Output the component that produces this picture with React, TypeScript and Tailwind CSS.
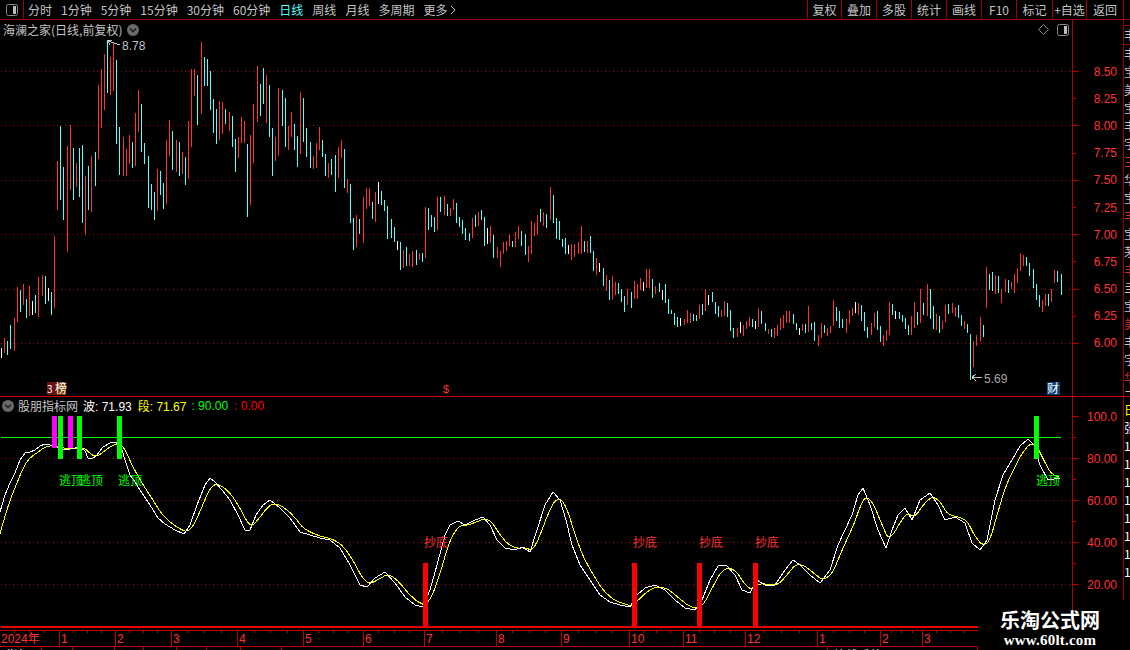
const leftMenu = ["分时", "1分钟", "5分钟", "15分钟", "30分钟", "60分钟", "日线", "周线", "月线", "多周期", "更多"];
const rightMenu = [
  ["复权", 34],
  ["叠加", 35],
  ["多股", 35],
  ["统计", 35],
  ["画线", 35],
  ["F10", 35],
  ["标记", 36],
  ["+自选", 34],
  ["返回", 37],
] as const;

const priceLabels = ["8.50", "8.25", "8.00", "7.75", "7.50", "7.25", "7.00", "6.75", "6.50", "6.25", "6.00"];
const indicatorLabels = ["100.0", "", "80.00", "", "60.00", "", "40.00", "", "20.00"];
const months = [
  ["2024年", 59],
  ["1", 56],
  ["2", 56],
  ["3", 66],
  ["4", 66],
  ["5", 60],
  ["6", 61],
  ["7", 72],
  ["8", 65],
  ["9", 68],
  ["10", 54],
  ["11", 62],
  ["12", 72],
  ["1", 63],
  ["2", 42],
  ["3", 56],
] as const;
const lowerCells = [
  ["指标", 42],
  ["", 31],
  ["", 42],
  ["", 29],
  ["", 33],
  ["", 30],
  ["", 34],
  ["", 41],
  ["", 546],
  ["均线系统", 150],
] as const;

const sideChars = "丰宝美宝丰字三华宝丰宝茅丰亖宝美丰字华三".split("");
const sideLower = ["日", "张", "1", "1", "1", "1", "1", "1", "1", "1"];

type Bar = { x: number; top: number; bottom: number; color: string };
const barColors: Record<string, string> = { R: "#ff3232", C: "#54ffff", W: "#ffffff" };

// crops were read at 3x, so each entry is "x top bottom colour" in crop pixels
function readBars(ox: number, oy: number, list: string): Bar[] {
  return list.split(",").map((entry) => {
    const [x, top, bottom, c] = entry.trim().split(" ");
    return {
      x: ox + Math.floor(Number(x) / 3),
      top: oy + Math.round(Number(top) / 3),
      bottom: oy + Math.round(Number(bottom) / 3),
      color: barColors[c],
    };
  });
}

const bars: Bar[] = [
  ...readBars(0, 200, "4 444 474 W,13 414 459 R,22 423 465 C,31 375 447 C,43 354 453 R,52 261 366 R,61 270 336 C,70 252 315 R,79 297 354 C,88 258 348 R,97 303 345 W,106 285 339 C,115 231 351 R,127 225 288 R,136 228 312 C,145 264 303 W,154 276 345 C,163 108 324 R"),
  ...readBars(0, 40, "171 363 510 R,181 258 480 C,190 381 540 C,202 318 636 R,211 255 450 R,220 324 480 C,229 369 441 R,238 324 471 C,247 315 549 C,256 408 585 R,265 378 510 C,274 348 516 R,286 336 438 C,295 135 357 R,304 87 264 R,313 42 210 R,322 0 159 C,331 51 165 R,340 10 153 R,349 60 312 C,358 261 405 C,370 291 408 R,379 327 408 R,388 285 372 R,397 306 384 C,406 219 378 R,415 150 276 R,424 192 336 C,433 309 372 C,445 348 504 C,454 432 510 C,463 456 540 C,472 387 513 R,481 393 465 C,490 429 507 C,499 300 492 R,508 240 348 R,517 273 390 C,529 300 396 R,538 306 408 C,547 336 402 R,556 351 435 C,565 243 417 R,574 87 321 R,583 87 168 R,592 105 255 C,604 6 222 R,613 51 138 C,622 57 138 C,631 93 210 C,640 177 279 C,649 207 312 C,658 183 300 R,667 186 282 R,676 207 252 C,688 216 273 R,697 228 321 C,706 297 396 C,715 291 354 R,724 231 309 R,733 243 309 R,742 312 531 C,751 285 495 R,760 192 369 R,772 78 246 R,781 132 228 C,790 84 192 C,799 105 249 R,808 135 291 C,817 264 408 C,826 291 363 R,835 144 348 R,847 150 258 C,856 174 321 C,865 258 330 R,874 216 291 R,883 252 330 C,892 288 381 C"),
  ...readBars(300, 90, "1 6 192 R,10 24 156 C,19 114 201 C,31 156 234 C,40 198 237 R,49 159 234 R,58 111 180 R,67 150 201 C,76 192 258 C,85 219 264 R,94 207 255 C,106 195 306 C,115 171 264 R,124 150 204 R,133 177 294 C,142 267 309 R,151 282 399 C,160 384 480 C,169 375 471 R,178 387 432 C,190 321 459 R,199 294 357 R,208 294 348 R,217 336 387 C,226 306 396 R,235 276 342 W,244 303 345 C,253 330 363 C,262 348 447 C,274 387 444 C,283 411 456 C,292 453 480 W,301 456 540 C,310 480 534 R,319 471 528 C,328 492 528 R,337 483 531 R,349 480 525 C,358 489 510 R,367 489 516 C,376 351 504 R,385 354 420 C,394 375 411 C,403 381 426 C,412 321 420 R,421 321 366 C,433 318 375 R,442 342 378 C,451 354 378 R,460 327 360 R,469 339 399 C,478 381 411 C,487 390 432 C,496 414 450 C,508 429 453 C,517 384 444 R,526 375 411 C,535 366 408 R,544 360 390 C,553 381 468 C,562 414 462 W,571 408 459 R,580 435 504 C,592 471 504 R,601 483 531 R,610 456 492 R,619 453 483 R,628 435 468 R,637 453 471 C,646 426 471 R,655 408 447 R,664 423 468 C,676 432 495 C,685 468 516 R,694 393 492 R,703 399 438 R,712 375 432 R,721 357 396 C,730 366 408 R,739 372 414 C,751 291 390 R,760 315 399 C,769 384 447 C,778 393 450 C,787 447 471 C,796 444 492 C,805 465 492 W,814 462 510 R,823 462 501 R,835 456 492 R,844 408 492 R,853 453 486 C,862 453 489 R,871 438 489 C,880 483 543 C,889 504 555 R,898 519 546 W"),
  ...readBars(590, 240, "40 84 138 C,49 105 153 R,58 120 180 C,67 108 177 R,76 126 165 R,85 129 162 C,94 147 186 C,103 168 216 C,112 147 195 R,124 156 204 C,133 123 177 R,142 132 177 R,151 114 150 R,160 126 153 W,169 87 144 R,178 87 144 R,187 117 174 C,196 138 162 R,208 129 156 C,217 150 180 W,226 132 189 C,235 177 222 C,244 210 222 C,253 219 255 C,262 231 261 C,271 234 258 W,283 237 255 R,292 210 249 R,301 219 249 R,310 222 243 C,319 225 243 C,328 195 237 R,337 192 225 C,346 150 213 R,355 165 195 W,367 156 186 C,376 186 222 C,385 198 231 C,394 210 231 R,403 183 228 R,412 189 231 C,421 210 273 C,430 264 294 C,442 264 291 R,451 246 279 W,460 255 288 R,469 243 267 R,478 231 258 R,487 237 261 C,496 243 267 W,505 204 261 R,514 213 252 C,526 249 273 C,535 267 282 R,544 267 291 C,553 264 294 R,562 255 288 R,571 234 270 R,580 225 264 R,589 213 249 R,598 213 249 R,610 222 252 C,619 249 270 C,628 264 285 W,637 252 273 R,646 252 279 C,655 198 276 R,664 249 270 C,673 246 303 C,685 285 318 R,694 249 294 R,703 255 279 C,712 264 288 R"),
  ...readBars(825, 240, "16 258 279 R,25 180 258 R,34 201 243 C,43 213 264 C,52 237 264 C,64 237 279 R,73 210 252 R,82 204 228 R,91 186 219 W,100 189 225 R,109 195 243 C,118 216 273 C,127 261 294 C,139 249 285 R,148 219 261 R,157 213 270 C,166 258 306 C,175 285 318 R,184 270 303 R,193 186 285 R,202 192 225 C,211 213 237 W,223 216 237 C,232 225 246 C,241 234 267 C,250 255 285 C,259 228 285 R,268 186 264 R,277 216 255 C,286 147 249 R,295 189 225 C,307 132 228 R,316 147 237 C,325 198 267 C,334 222 270 R,343 228 279 C,352 243 267 R,361 195 246 R,370 192 222 C,382 189 219 R,391 201 231 R,400 195 234 C,409 225 258 C,418 243 267 R,427 252 279 C,436 282 420 C,445 303 381 R,454 285 318 R,466 231 303 R,475 255 291 C,484 81 204 R,493 102 150 C,502 96 153 C,511 105 162 R,520 108 159 C,529 147 189 R,541 117 156 R,550 120 159 C,559 126 147 R,568 102 159 R,577 84 129 R,586 39 93 R,595 45 78 R,604 51 78 C,613 69 108 C,625 87 144 C,634 132 180 C,643 165 201 C,652 180 216 R,661 162 198 R,670 162 198 C,679 147 186 R,688 90 129 R,697 93 126 C,709 102 165 C"),
];

const whiteKnots = [
  [0, 512], [5, 495], [10, 483], [15, 473], [20, 460], [25, 453], [30, 452], [35, 450], [40, 446], [45, 444], [50, 445], [55, 447],
  [62, 449], [66, 450], [70, 449], [75, 448], [80, 447], [85, 451], [88, 458], [92, 459], [97, 455], [103, 447], [110, 443], [116, 442],
  [122, 450], [125, 460], [130, 475], [135, 482], [140, 490], [150, 505], [158, 518], [165, 524], [175, 530], [184, 534], [190, 525],
  [197, 505], [205, 485], [210, 478], [215, 482], [222, 490], [230, 500], [238, 515], [245, 530], [250, 530], [256, 515], [263, 505],
  [270, 500], [280, 508], [290, 518], [300, 532], [310, 535], [320, 538], [330, 540], [340, 548], [350, 565], [360, 585], [367, 587],
  [375, 578], [385, 572], [395, 583], [405, 597], [415, 605], [423, 607], [430, 590], [437, 565], [445, 535], [450, 525], [458, 521],
  [465, 525], [475, 520], [483, 517], [490, 525], [497, 540], [505, 548], [515, 550], [522, 547], [530, 552], [537, 530], [545, 505],
  [553, 492], [560, 500], [566, 520], [572, 545], [580, 565], [590, 580], [600, 595], [610, 602], [620, 605], [630, 607], [637, 595],
  [645, 588], [655, 585], [665, 590], [675, 600], [685, 608], [695, 610], [702, 600], [710, 580], [718, 566], [726, 565], [735, 575],
  [742, 590], [750, 593], [757, 580], [765, 585], [775, 585], [785, 570], [793, 560], [800, 565], [810, 575], [820, 583], [830, 570],
  [838, 545], [845, 530], [852, 515], [858, 495], [863, 488], [870, 505], [878, 530], [886, 548], [892, 530], [898, 515], [905, 508],
  [912, 520], [920, 500], [930, 493], [938, 505], [945, 520], [955, 517], [965, 523], [972, 543], [980, 550], [987, 540], [995, 500],
  [1003, 475], [1012, 460], [1020, 446], [1028, 439], [1034, 445], [1040, 465], [1048, 480], [1060, 478],
];

// the yellow line is a lagging average of the white one
function laggedLine(knots: number[][]) {
  const out: string[] = [];
  let y = 537;
  for (let i = 0; i < knots.length - 1; i++) {
    const [x0, y0] = knots[i];
    const [x1, y1] = knots[i + 1];
    for (let x = x0; x < x1; x++) {
      const w = y0 + ((y1 - y0) * (x - x0)) / (x1 - x0);
      y += (w - y) * 0.14;
      out.push(`${x},${y.toFixed(1)}`);
    }
  }
  return out.join(" ");
}
const whiteLine = whiteKnots.map((p) => p.join(",")).join(" ");
const yellowLine = laggedLine(whiteKnots);

const mainGrid = [71, 125, 180, 234, 289, 343];
const subGrid = [458, 500, 542, 584];
const topBars = [
  [52, 448, "#ff00ff"],
  [68, 448, "#ff00ff"],
  [58, 459, "#00ff00"],
  [77, 459, "#00ff00"],
  [117, 459, "#00ff00"],
  [1034, 459, "#00ff00"],
] as const;
const redBars = [423, 632, 697, 753];

function PanelIcon({ className }: { className?: string }) {
  return (
    <svg width="12" height="12" viewBox="0 0 12 12" className={className}>
      <rect x="0.5" y="0.5" width="11" height="11" rx="2" fill="none" stroke="#8a8a8a" />
      <rect x="7" y="2" width="3" height="8" fill="#bdbdbd" />
    </svg>
  );
}

function RoundArrow() {
  return (
    <svg width="12" height="12" viewBox="0 0 12 12" className="shrink-0">
      <circle cx="6" cy="6" r="6" fill="#6a6a6a" />
      <path d="M3 4.5 L6 7.5 L9 4.5" fill="none" stroke="#1c1c1c" strokeWidth="1.4" />
    </svg>
  );
}

function Axis({ labels, rowClass, className }: { labels: readonly string[]; rowClass: string; className: string }) {
  return (
    <div className={`flex w-[50px] flex-col border-l border-[#b00000] ${className}`}>
      {labels.map((label, i) => (
        <div key={i} className={`flex shrink-0 items-center justify-between pr-[5px] ${rowClass}`}>
          <div className={`h-px bg-[#b00000] ${i % 2 === 0 ? "w-[6px]" : "w-[3px]"}`} />
          <span className="text-[12px] leading-none text-[#ff3232]">{label}</span>
        </div>
      ))}
    </div>
  );
}

export default function App() {
  return (
    <div className="flex h-[650px] w-[1130px] flex-col overflow-hidden bg-black font-['Liberation_Sans','Noto_Sans_CJK_SC',sans-serif] text-[12px] text-[#c4c4c4]">
      {/* toolbar */}
      <div className="flex h-5 shrink-0 items-stretch border-b border-[#a00000]">
        <div className="flex w-6 items-center justify-center border-r border-[#a00000]">
          <PanelIcon />
        </div>
        <nav className="flex flex-1 items-center gap-[9px] pl-1 font-['Noto_Sans_CJK_SC',sans-serif]">
          {leftMenu.map((item) => (
            <span key={item} className={item === "日线" ? "text-[#54ffff]" : ""}>
              {item}
            </span>
          ))}
          <svg width="6" height="10" viewBox="0 0 6 10" className="-ml-[6px]">
            <path d="M1 1 L5 5 L1 9" fill="none" stroke="#c4c4c4" />
          </svg>
        </nav>
        <div className="flex items-stretch">
          {rightMenu.map(([label, width]) => (
            <div
              key={label}
              style={{ width }}
              className="flex items-center justify-center border-l border-[#a00000] font-['Noto_Sans_CJK_SC',sans-serif] whitespace-nowrap"
            >
              {label}
            </div>
          ))}
          <div className="w-[7px] border-l border-[#a00000]" />
        </div>
      </div>

      <div className="flex h-[580px] shrink-0">
        <div className="flex w-[1123px] flex-col">
          {/* price pane */}
          <div className="flex h-[377px] shrink-0 border-b border-[#d00000]">
            <div className="flex w-[1072px] flex-col">
              <div className="flex h-[19px] shrink-0 items-center justify-between pr-[3px] pl-[3px]">
                <div className="flex items-center gap-[5px] font-['Noto_Sans_CJK_SC',sans-serif]">
                  <span>海澜之家(日线,前复权)</span>
                  <RoundArrow />
                </div>
                <div className="flex items-center gap-[8px]">
                  <svg width="11" height="11" viewBox="0 0 11 11">
                    <path d="M5.5 0.5 L10.5 5.5 L5.5 10.5 L0.5 5.5 Z" fill="none" stroke="#8a8a8a" />
                  </svg>
                  <PanelIcon />
                </div>
              </div>
              <svg width="1072" height="357" viewBox="0 39 1072 357" className="block" shapeRendering="crispEdges">
                {mainGrid.map((y) => (
                  <line key={y} x1="1" x2="1072" y1={y + 0.5} y2={y + 0.5} stroke="#9c1010" strokeDasharray="1 3" />
                ))}
                {bars.map((b, i) => (
                  <rect key={i} x={b.x} y={b.top} width="1" height={b.bottom - b.top} fill={b.color} />
                ))}
                <path d="M120 45 L108 41 M108 41 L112 40 M108 41 L110 45" stroke="#c4c4c4" fill="none" />
                <text x="122" y="50" className="fill-[#c4c4c4] text-[12px]">8.78</text>
                <path d="M982 377.5 L972 377.5 M972 377.5 L976 374 M972 377.5 L976 381" stroke="#c4c4c4" fill="none" />
                <text x="984" y="383" className="fill-[#a8a8a8] text-[12px]">5.69</text>
                <rect x="47" y="382" width="10" height="13" fill="#6e1010" />
                <rect x="57" y="382" width="9" height="13" fill="#7a4000" />
                <text x="47" y="393" className="fill-white font-['Noto_Sans_CJK_SC',sans-serif] text-[10px]">3</text>
                <text x="55" y="393" className="fill-white font-['Noto_Sans_CJK_SC',sans-serif] text-[12px]">榜</text>
                <text x="443" y="393" className="fill-[#ff3232] text-[11px]">$</text>
                <rect x="1047" y="382" width="13" height="13" fill="#0c3f78" />
                <text x="1047" y="393" className="fill-white font-['Noto_Sans_CJK_SC',sans-serif] text-[12px]">财</text>
              </svg>
            </div>
            <Axis labels={priceLabels} rowClass="h-[27.2px]" className="pt-[38px]" />
          </div>

          {/* indicator pane */}
          <div className="flex flex-1">
            <div className="flex w-[1072px] flex-col">
              <div className="flex h-[18px] shrink-0 items-center gap-[6px] pl-[2px]">
                <RoundArrow />
                <span className="-ml-[2px] font-['Noto_Sans_CJK_SC',sans-serif]">股朋指标网</span>
                <span className="-ml-px text-white">
                  <span className="font-['Noto_Sans_CJK_SC',sans-serif]">波</span>: 71.93
                </span>
                <span className="text-[#ffff00]">
                  <span className="font-['Noto_Sans_CJK_SC',sans-serif]">段</span>: 71.67
                </span>
                <span className="-ml-px text-[#00ff00]">: 90.00</span>
                <span className="text-[#ff0000]">: 0.00</span>
              </div>
              {/* the pane's drawing runs on to the red rule at y=626, below the axis column */}
              <svg width="1072" height="211" viewBox="0 415 1072 211" className="relative block shrink-0">
                <g shapeRendering="crispEdges">
                  {subGrid.map((y) => (
                    <line key={y} x1="1" x2="1072" y1={y + 0.5} y2={y + 0.5} stroke="#9c1010" strokeDasharray="1 3" />
                  ))}
                  <line x1="1" x2="1061" y1="437.5" y2="437.5" stroke="#00ff00" />
                  <polyline points={yellowLine} fill="none" stroke="#ffff00" strokeWidth="1" />
                  <polyline points={whiteLine} fill="none" stroke="#ffffff" strokeWidth="1" />
                  {topBars.map(([x, bottom, color]) => (
                    <rect key={x} x={x} y="416" width="5" height={bottom - 416} fill={color} />
                  ))}
                  {redBars.map((x) => (
                    <rect key={x} x={x} y="563" width="5" height="63" fill="#ff0000" />
                  ))}
                </g>
                {[59, 79, 118, 1036].map((x) => (
                  <text key={x} x={x} y="485" className="fill-[#00ff00] font-['Noto_Sans_CJK_SC',sans-serif] text-[12px]">
                    逃顶
                  </text>
                ))}
                {[424, 633, 699, 755].map((x) => (
                  <text key={x} x={x} y="547" className="fill-[#ff3232] font-['Noto_Sans_CJK_SC',sans-serif] text-[12px]">
                    抄底
                  </text>
                ))}
              </svg>
            </div>
            <Axis labels={indicatorLabels} rowClass="h-[21px]" className="pt-[9px]" />
          </div>
        </div>

        {/* stock list cut off by the window */}
        <div className="flex flex-1 flex-col overflow-hidden border-l border-[#a00000] font-['Noto_Sans_CJK_SC',sans-serif] leading-[18px]">
          <div className="h-[6px] shrink-0 border-b border-[#a00000]" />
          <div className="h-[19px] shrink-0 overflow-hidden border-b border-[#a00000]">丰</div>
          <div className="h-[351px] shrink-0 overflow-hidden">
            {sideChars.map((c, i) => (
              <div key={i} className={i > 5 && i % 3 === 0 ? "text-[#d03030]" : ""}>
                {c}
              </div>
            ))}
          </div>
          <div className="flex flex-1 flex-col overflow-hidden border-t border-[#d00000] pt-[4px] text-white">
            {sideLower.map((c, i) => (
              <div key={i} className={`shrink-0 ${i === 0 ? "text-[#ffff00]" : ""}`}>
                {c}
              </div>
            ))}
          </div>
        </div>
      </div>

      {/* time axis and watermark */}
      <div className="flex flex-1">
        <div className="flex w-[978px] flex-col pt-[26px]">
          <div className="relative ml-px h-[2px] shrink-0 bg-[#e60000]" />
          <div className="mt-[2px] flex h-[17px] shrink-0 border-y border-[#c00000]">
            {months.map(([label, width], i) => (
              <div key={i} style={{ width }} className={`flex shrink-0 flex-col ${i > 0 ? "border-l border-[#c00000]" : ""}`}>
                <div className="flex h-[2px] shrink-0 justify-evenly">
                  <div className="w-px bg-[#c00000]" />
                  <div className="w-px bg-[#c00000]" />
                  <div className="w-px bg-[#c00000]" />
                </div>
                <span className="pl-[1px] leading-[13px] text-[#ff3232]">{label}</span>
              </div>
            ))}
          </div>
          <div className="flex flex-1 overflow-hidden">
            {lowerCells.map(([label, width], i) => (
              <div
                key={i}
                style={{ width }}
                className="shrink-0 border-r border-[#c00000] pt-[2px] pl-[6px] font-['Noto_Sans_CJK_SC',sans-serif] leading-[12px] whitespace-nowrap text-white"
              >
                {label}
              </div>
            ))}
          </div>
        </div>
        <div className="flex flex-1 flex-col items-center pt-[8px] pr-[8px] text-white">
          <span className="font-['Noto_Sans_CJK_SC',sans-serif] text-[20px] leading-[24px] font-bold">乐淘公式网</span>
          <span className="font-['Liberation_Serif',serif] text-[15px] leading-[16px] font-bold tracking-[0.2px]">www.60lt.com</span>
        </div>
      </div>
    </div>
  );
}
